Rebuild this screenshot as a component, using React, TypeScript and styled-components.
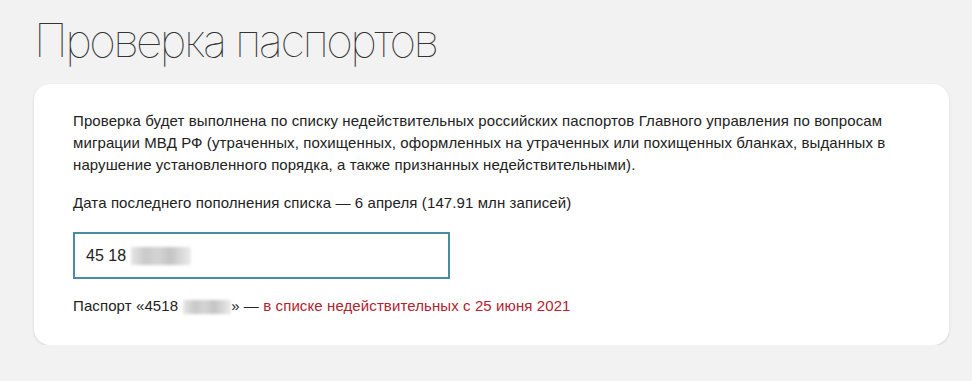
import React, { useState } from 'react';
import styled, { createGlobalStyle } from 'styled-components';

const GlobalStyle = createGlobalStyle`
  html, body {
    margin: 0;
    padding: 0;
    background: #f2f2f2;
  }
  body {
    font-family: "Liberation Sans", Arial, sans-serif;
    color: #222;
  }
`;

const Page = styled.div`
  padding: 12px 23px 0 34px;
`;

const Title = styled.h1`
  margin: 0 0 16px 0;
  font-family: Inter, "Open Sans", sans-serif;
  font-weight: 100;
  font-size: 46px;
  line-height: 56px;
  letter-spacing: -2.6px;
  color: #333;
`;

const Card = styled.div`
  background: #fff;
  border-radius: 16px;
  box-shadow: 0 1px 3px rgba(0, 0, 0, 0.12);
  padding: 26px 39px 28px 39px;
  width: 915px;
  box-sizing: border-box;
`;

const Text = styled.p<{ $gap?: number }>`
  margin: 0 0 ${(p) => p.$gap ?? 16}px 0;
  font-size: 15px;
  line-height: 22px;
  letter-spacing: 0.1px;
  color: #222;
`;

const Input = styled.div`
  width: 377px;
  height: 47px;
  box-sizing: border-box;
  border: 2px solid #4a8ba3;
  display: flex;
  align-items: center;
  padding: 0 11px;
  font-size: 16px;
  color: #222;
  margin-bottom: 16px;
`;

const Hidden = styled.span<{ $w: number; $h: number }>`
  display: inline-block;
  width: ${(p) => p.$w}px;
  height: ${(p) => p.$h}px;
  margin-left: 5px;
  vertical-align: middle;
  background: linear-gradient(
    90deg,
    #e6e6e6 0%,
    #c8c8c8 25%,
    #d4d4d4 45%,
    #c4c4c4 65%,
    #dadada 85%,
    #ececec 100%
  );
  filter: blur(1.5px);
`;

const Red = styled.span`
  color: #b3212f;
`;

const App: React.FC = () => {
  const [value] = useState('45 18');

  return (
    <Page>
      <GlobalStyle />
      <Title>Проверка паспортов</Title>
      <Card>
        <Text>
          Проверка будет выполнена по списку недействительных российских паспортов Главного
          управления по вопросам миграции МВД РФ (утраченных, похищенных, оформленных на
          утраченных или похищенных бланках, выданных в нарушение установленного порядка, а
          также признанных недействительными).
        </Text>
        <Text $gap={18}>Дата последнего пополнения списка — 6 апреля (147.91 млн записей)</Text>
        <Input>
          {value}
          <Hidden $w={60} $h={18} />
        </Input>
        <Text $gap={0}>
          Паспорт «4518<Hidden $w={48} $h={14} />» — <Red>в списке недействительных с 25 июня 2021</Red>
        </Text>
      </Card>
    </Page>
  );
};

export default App;
